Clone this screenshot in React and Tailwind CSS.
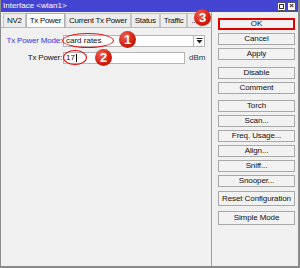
import React from 'react'

const font = { fontFamily: '"Liberation Sans", Arial, sans-serif' }

function Badge({ n, className }) {
  return (
    <div
      className={`absolute w-[17px] h-[17px] rounded-full bg-[radial-gradient(circle_at_35%_30%,#f06050,#d42010_55%,#a01000)] flex items-center justify-center text-white font-bold text-[13px] leading-none z-10 ${className}`}
    >
      {n}
    </div>
  )
}

function Btn({ children, className = '' }) {
  return (
    <div
      className={`h-[12px] border border-[#a8a8a8] bg-[#f2f2f2] flex items-center justify-center text-[8px] text-[#111] leading-none tracking-[-0.1px] ${className}`}
    >
      {children}
    </div>
  )
}

const tabs = ['NV2', 'Tx Power', 'Current Tx Power', 'Status', 'Traffic', '...']

export default function App() {
  return (
    <div
      className="w-[300px] h-[268px] bg-[#f0f0f0] flex flex-col border-l border-b-2 border-r-2 border-[#8a8a8a] overflow-hidden relative"
      style={font}
    >
      {/* タイトルバー */}
      <div className="h-[12px] bg-[#4444d2] flex items-center justify-between pl-[2px] pr-[2px]">
        <span className="text-white text-[8px] leading-none">Interface &lt;wlan1&gt;</span>
        <div className="flex gap-[1px]">
          <div className="w-[9px] h-[9px] bg-white border border-[#555] flex items-center justify-center">
            <div className="w-[5px] h-[5px] border border-[#333]" />
          </div>
          <div className="w-[9px] h-[9px] bg-white border border-[#555] flex items-center justify-center text-[8px] leading-none font-bold text-[#222]">
            ×
          </div>
        </div>
      </div>

      <div className="flex flex-1">
        {/* 左側 */}
        <div className="w-[210px] flex flex-col relative">
          <div className="flex h-[15px] mt-[1px] pl-[2px] border-b border-[#b8b8b8] items-end">
            {tabs.map((t, i) => (
              <div
                key={t}
                className={`h-[14px] px-[3px] flex items-center text-[8px] leading-none text-[#111] tracking-[-0.3px] border border-b-0 ${
                  i === 1 ? 'bg-[#fbfbfb] border-[#b0b0b0]' : 'border-[#c4c4c4] bg-[#ececec]'
                }`}
              >
                {t}
              </div>
            ))}
          </div>

          {/* フォーム */}
          <div className="flex flex-col gap-[5px] pt-[7px]">
            <div className="flex items-center h-[12px]">
              <span className="w-[62px] text-right text-[8px] text-[#3535dd] leading-none pr-[1px] tracking-[-0.2px]">Tx Power Mode:</span>
              <div className="w-[142px] h-[12px] bg-white border border-[#b4b4b4] flex items-center">
                <span className="flex-1 pl-[2px] text-[8px] leading-none text-[#111]">card rates</span>
                <div className="w-[11px] h-full border-l border-[#b4b4b4] flex items-center justify-center">
                  <svg width="7" height="6" viewBox="0 0 7 6">
                    <rect x="0.5" y="0" width="6" height="1" fill="#222" />
                    <path d="M0.5 2 L6.5 2 L3.5 5.5 Z" fill="#222" />
                  </svg>
                </div>
              </div>
            </div>
            <div className="flex items-center h-[12px]">
              <span className="w-[62px] text-right text-[8px] text-[#111] leading-none pr-[1px] tracking-[-0.2px]">Tx Power:</span>
              <div className="w-[122px] h-[12px] bg-white border border-[#b4b4b4] flex items-center">
                <span className="pl-[2px] text-[8px] leading-none text-[#111]">17</span>
                <div className="w-[1px] h-[8px] bg-black ml-[1px]" />
              </div>
              <span className="ml-[4px] text-[8px] leading-none text-[#333]">dBm</span>
            </div>
          </div>

          {/* 注釈 */}
          <div className="absolute left-[61px] top-[21px] w-[52px] h-[15px] rounded-[50%] border-[1.5px] border-[#e01010]" />
          <div className="absolute left-[62px] top-[38px] w-[24px] h-[15px] rounded-[50%] border-[1.5px] border-[#e01010]" />
          <Badge n="1" className="left-[118px] top-[19px]" />
          <Badge n="2" className="left-[94px] top-[37px]" />
          <Badge n="3" className="left-[193px] top-[-3px]" />
        </div>

        {/* 右側ボタン */}
        <div className="flex-1 border-l border-[#a0a0a0] flex flex-col pl-[6px] pr-[3px] pt-[6px]">
          <Btn className="border-2 border-[#e00000]">OK</Btn>
          <Btn className="mt-[3px]">Cancel</Btn>
          <Btn className="mt-[3px]">Apply</Btn>
          <Btn className="mt-[7px]">Disable</Btn>
          <Btn className="mt-[3px]">Comment</Btn>
          <Btn className="mt-[6px]">Torch</Btn>
          <Btn className="mt-[3px]">Scan...</Btn>
          <Btn className="mt-[3px]">Freq. Usage...</Btn>
          <Btn className="mt-[3px]">Align...</Btn>
          <Btn className="mt-[3px]">Sniff...</Btn>
          <Btn className="mt-[3px]">Snooper...</Btn>
          <Btn className="mt-[4px] h-[15px]">Reset Configuration</Btn>
          <Btn className="mt-[5px] h-[14px]">Simple Mode</Btn>
        </div>
      </div>
    </div>
  )
}
